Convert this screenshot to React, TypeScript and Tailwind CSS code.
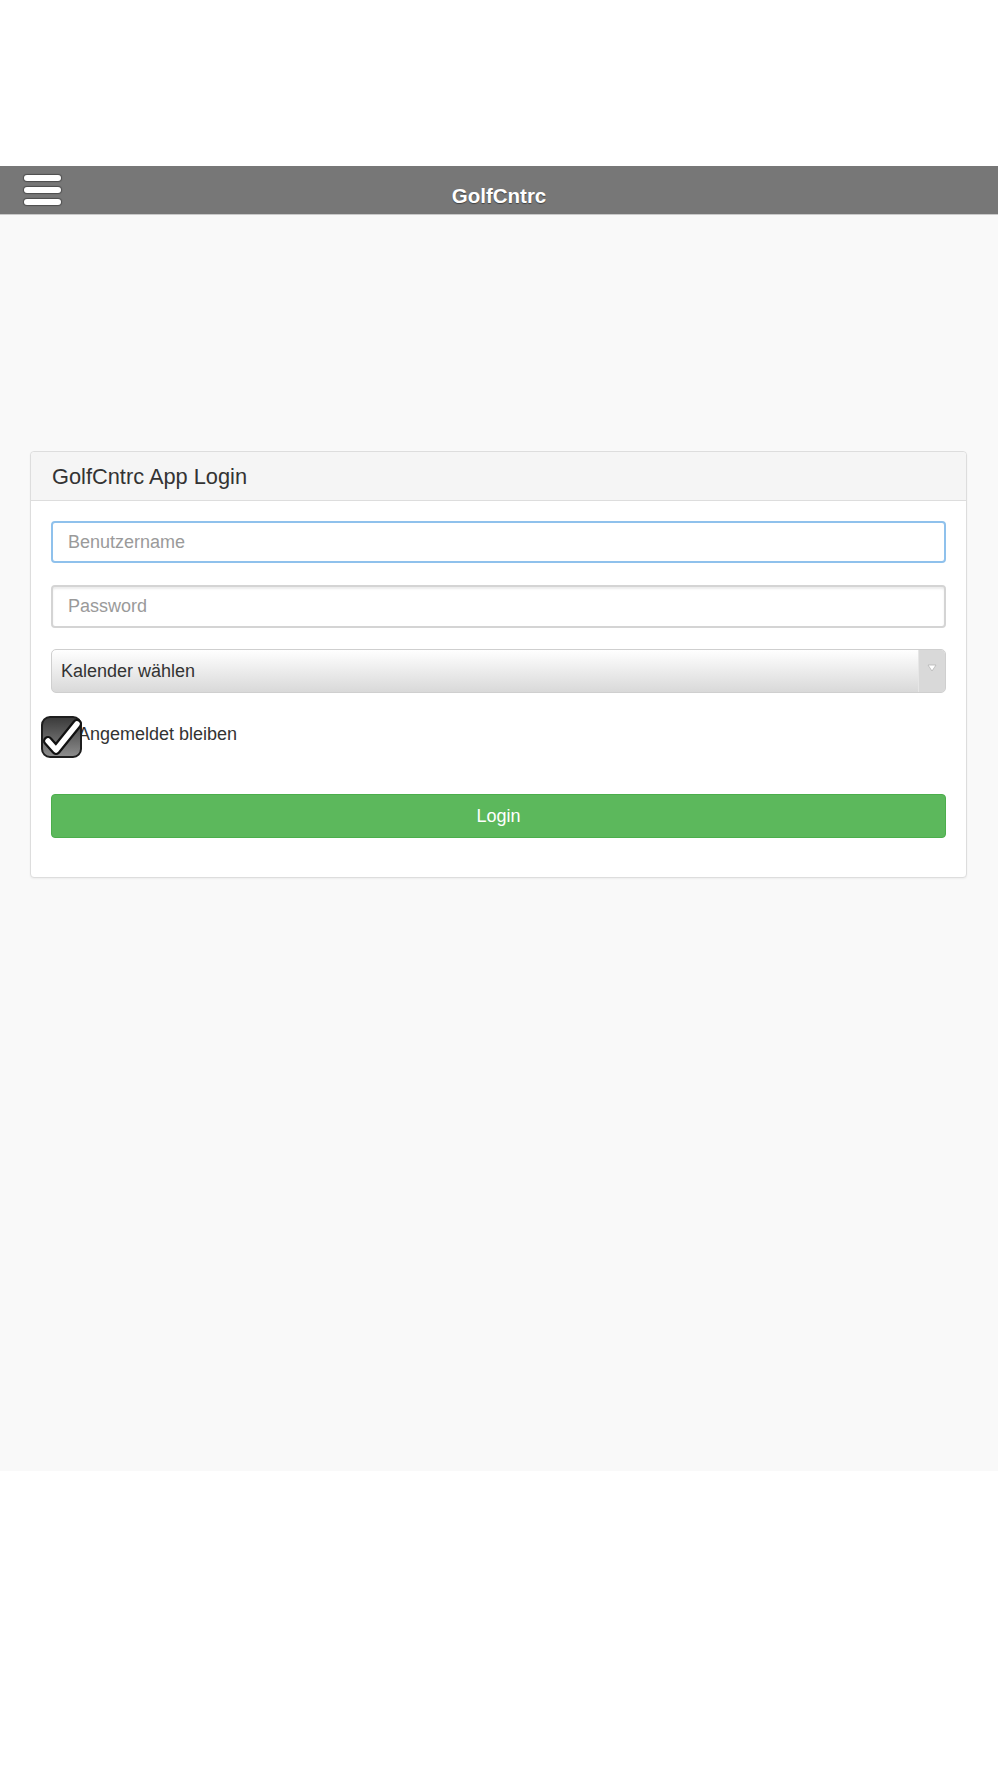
import React from 'react';

const font = { fontFamily: '"Liberation Sans", Arial, Helvetica, sans-serif' };

const MenuBars: React.FC = () => (
  <div className="flex flex-col gap-[6px] w-[37px]">
    <span className="block h-[6px] rounded-full bg-white shadow-[0_0_1px_1px_rgba(0,0,0,0.35)]"></span>
    <span className="block h-[6px] rounded-full bg-white shadow-[0_0_1px_1px_rgba(0,0,0,0.35)]"></span>
    <span className="block h-[6px] rounded-full bg-white shadow-[0_0_1px_1px_rgba(0,0,0,0.35)]"></span>
  </div>
);

const CheckBox: React.FC = () => (
  <div className="relative w-[41px] h-[42px] shrink-0 rounded-[9px] border-2 border-[#1e1e1e] bg-gradient-to-b from-[#3c3c3c] to-[#8c8c8c]">
    <svg className="absolute -left-[2px] -top-[2px] overflow-visible" width="41" height="42" viewBox="0 0 41 42">
      <path d="M7 25 L15 34 L36 8" fill="none" stroke="#111" strokeWidth="10" strokeLinecap="round" strokeLinejoin="round" />
      <path d="M7 25 L15 34 L36 8" fill="none" stroke="#fff" strokeWidth="5.5" strokeLinecap="round" strokeLinejoin="round" />
    </svg>
  </div>
);

const App: React.FC = () => {
  return (
    <div className="w-full min-h-[1778px] bg-white pt-[166px]" style={font}>
      <div className="w-[998px]">
        {/* top bar */}
        <header className="h-[49px] bg-[#777777] border-b border-[#c9c9c9] grid grid-cols-[1fr_auto_1fr]">
          <div className="pl-[24px] pt-[9px]">
            <MenuBars />
          </div>
          <h1 className="pt-[20px] text-[20.5px] leading-[20px] font-bold text-white [text-shadow:0_1px_1px_rgba(0,0,0,0.45)]">
            GolfCntrc
          </h1>
          <div></div>
        </header>

        {/* content */}
        <main className="h-[1256px] bg-[#f9f9f9] pl-[30px] pt-[236px]">
          <div className="w-[937px] bg-white border border-[#dddddd] rounded-[4px] shadow-[0_1px_2px_rgba(0,0,0,0.05)]">
            <div className="bg-[#f5f5f5] border-b border-[#dddddd] rounded-t-[4px] pl-[21px] pt-[14px] pb-[13px]">
              <h2 className="text-[21.8px] leading-[21px] text-[#333333]">GolfCntrc App Login</h2>
            </div>

            <div className="px-[20px] pt-[20px] pb-[39px] flex flex-col">
              <input
                type="text"
                placeholder="Benutzername"
                className="h-[42px] w-full rounded-[4px] border-2 border-[#8fc1ec] px-[15px] text-[18px] text-[#333] placeholder:text-[#9a9a9a] outline-none"
              />
              <input
                type="password"
                placeholder="Password"
                className="mt-[22px] h-[43px] w-full rounded-[4px] border-2 border-[#d4d4d4] shadow-[inset_0_2px_2px_rgba(0,0,0,0.08)] px-[15px] text-[18px] text-[#333] placeholder:text-[#9a9a9a] outline-none"
              />

              <div className="mt-[21px] h-[44px] flex rounded-[5px] border border-[#cfcfcf] bg-gradient-to-b from-[#ffffff] to-[#d9d9d9] overflow-hidden">
                <div className="flex-1 flex items-center pl-[9px] text-[18px] text-[#333333]">Kalender wählen</div>
                <div className="w-[27px] bg-[#d9d9d9] border-l border-[#e6e6e6] flex justify-center pt-[14px]">
                  <svg width="10" height="8" viewBox="0 0 10 8">
                    <path d="M1 1 L9 1 L5 7 Z" fill="#fff" stroke="#b5b5b5" strokeWidth="0.8" strokeLinejoin="round" />
                  </svg>
                </div>
              </div>

              <label className="mt-[23px] flex items-start -ml-[10px]">
                <CheckBox />
                <span className="-ml-[4px] mt-[9px] text-[18px] leading-[18px] text-[#333333]">Angemeldet bleiben</span>
              </label>

              <button className="mt-[36px] h-[44px] w-full rounded-[4px] border border-[#4cae4c] bg-[#5cb85c] text-white text-[18px]">
                Login
              </button>
            </div>
          </div>
        </main>
      </div>
    </div>
  );
};

export default App;
